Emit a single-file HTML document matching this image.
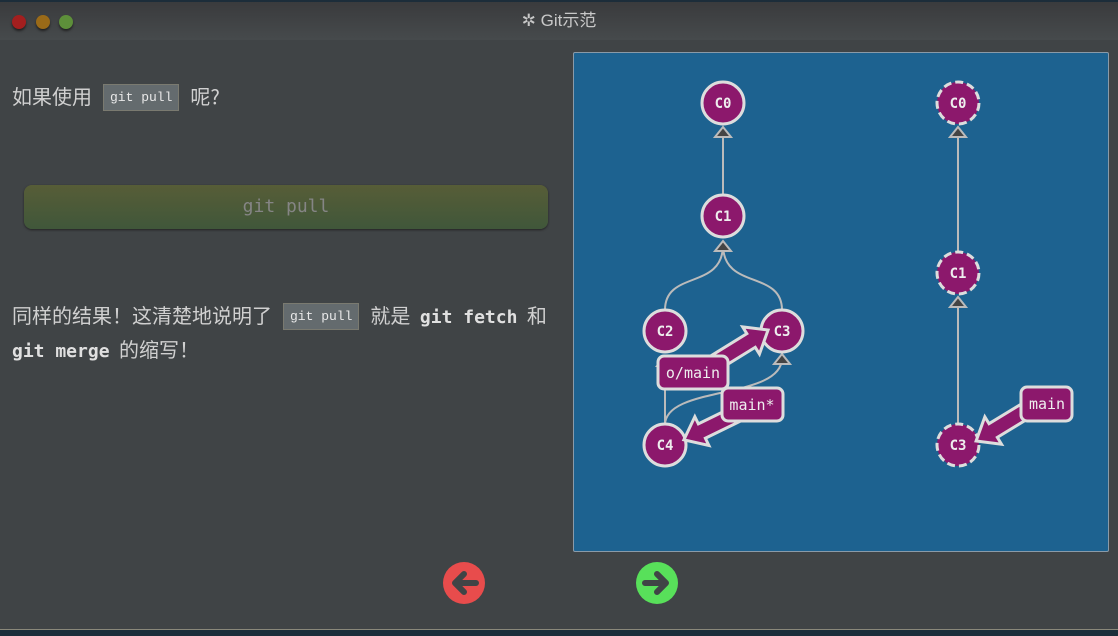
<!DOCTYPE html>
<html><head><meta charset="utf-8"><style>
*{margin:0;padding:0;box-sizing:border-box}
body{width:1118px;height:636px;overflow:hidden;background:#1c2d3a;position:relative;font-family:"Liberation Sans","Noto Sans CJK SC",sans-serif}
#win{position:absolute;left:0;top:2px;width:1118px;height:628px;background:#404446;border-bottom:1px solid #8a887a}
#title{position:absolute;left:0;top:0;width:1118px;height:38px;background:linear-gradient(#3a3b3d,#464a4c);color:#c8c8c8;font-size:17px;text-align:center;line-height:38px}
.dot{position:absolute;top:13px;width:14px;height:14px;border-radius:50%;box-shadow:0 2px 2px #222}
p.t{position:absolute;left:12px;color:#d0d0d0;font-size:20px;font-family:"Noto Sans CJK SC",sans-serif;white-space:nowrap}
code.k{font-family:"Liberation Mono",monospace;font-size:13px;background:#646b6e;border:1px solid #7a7a70;color:#e8e8e8;padding:5px 6px;margin:0 11px;vertical-align:3px}
b.m{font-family:"DejaVu Sans Mono",monospace;font-size:18px;color:#e0e0e0;margin:0 5px}
#btn{position:absolute;left:24px;top:183px;width:524px;height:44px;border-radius:8px;background:linear-gradient(#575d37,#40573a);box-shadow:0 1px 2px #222;color:#858585;font-family:"DejaVu Sans Mono",monospace;font-size:18px;text-align:center;line-height:44px}
#panel{position:absolute;left:573px;top:50px;width:536px;height:500px;background:#1d6290;border:1px solid #8a9aa8;border-radius:2px}
</style></head><body>
<div id="win">
<div id="title">
<div class="dot" style="left:12px;background:#a31f1f"></div>
<div class="dot" style="left:36px;background:#9a6a18"></div>
<div class="dot" style="left:59px;background:#5d8f3a"></div>
<span>✲ Git示范</span>
</div>
<p class="t" style="top:79px">如果使用<code class="k">git pull</code>呢?</p>
<div id="btn">git pull</div>
<p class="t" style="top:297px;line-height:31px">同样的结果！这清楚地说明了<code class="k">git pull</code>就是 <b class="m">git fetch</b> 和<br><b class="m" style="margin-left:0">git merge</b> 的缩写！</p>
<div id="panel"></div>
<svg style="position:absolute;left:0;top:-2px" width="1118" height="636">
<g stroke="#bbb" stroke-width="2" fill="none">
<line x1="723" y1="195" x2="723" y2="130"/>
<path d="M665 310 C665 270 723 290 723 245"/>
<path d="M782 310 C782 270 723 290 723 245"/>
<line x1="665" y1="425" x2="665" y2="360"/>
<path d="M665 425 C665 385 782 400 782 358"/>
<line x1="958" y1="252" x2="958" y2="130"/>
<line x1="958" y1="424" x2="958" y2="300"/>
</g>
<g fill="#444" stroke="#bbb" stroke-width="2">
<polygon points="723,127 715,137 731,137"/>
<polygon points="723,241 715,251 731,251"/>
<polygon points="665,356 657,366 673,366"/>
<polygon points="782,354 774,364 790,364"/>
<polygon points="958,127 950,137 966,137"/>
<polygon points="958,297 950,307 966,307"/>
</g>
<g fill="#8c186c" stroke="#ddd" stroke-width="3">
<circle cx="723" cy="103" r="21"/><circle cx="723" cy="216" r="21"/>
<circle cx="665" cy="331" r="21"/><circle cx="782" cy="331" r="21"/>
<circle cx="665" cy="445" r="21"/>
</g>
<g fill="#8c186c" stroke="#ddd" stroke-width="3" stroke-dasharray="8 4">
<circle cx="958" cy="103" r="21"/><circle cx="958" cy="273" r="21"/><circle cx="958" cy="445" r="21"/>
</g>
<g fill="#8c186c" stroke="#ddd" stroke-width="3">
<polygon transform="translate(700,372) rotate(-31.7)" points="0,-8 60,-8 60,-16 80,0 60,16 60,8 0,8"/>
<polygon transform="translate(745,410) rotate(154)" points="0,-8 48,-8 48,-16 68,0 48,16 48,8 0,8"/>
<polygon transform="translate(1035,405) rotate(148.6)" points="0,-8 49,-8 49,-16 69,0 49,16 49,8 0,8"/>
<rect x="658" y="356" width="70" height="33" rx="6"/>
<rect x="722" y="388" width="61" height="33" rx="6"/>
<rect x="1021" y="387" width="51" height="34" rx="6"/>
</g>
<g fill="#eee" font-family="DejaVu Sans Mono,monospace" font-size="14" font-weight="bold" text-anchor="middle">
<text x="723" y="108">C0</text><text x="723" y="221">C1</text><text x="665" y="336">C2</text>
<text x="782" y="336">C3</text><text x="665" y="450">C4</text>
<text x="958" y="108">C0</text><text x="958" y="278">C1</text><text x="958" y="450">C3</text>
</g>
<g fill="#eee" font-family="DejaVu Sans Mono,monospace" font-size="15" text-anchor="middle">
<text x="693" y="378">o/main</text><text x="752" y="410">main*</text><text x="1047" y="409">main</text>
</g>
<g>
<circle cx="464" cy="583" r="21" fill="#e84c4c"/>
<path d="M476 583 H456 M464 574 L455 583 L464 592" stroke="#404446" stroke-width="6" fill="none" stroke-linecap="round" stroke-linejoin="round"/>
<circle cx="657" cy="583" r="21" fill="#58e05a"/>
<path d="M645 583 H665 M657 574 L666 583 L657 592" stroke="#404446" stroke-width="6" fill="none" stroke-linecap="round" stroke-linejoin="round"/>
</g>
</svg>
</div>
</body></html>
